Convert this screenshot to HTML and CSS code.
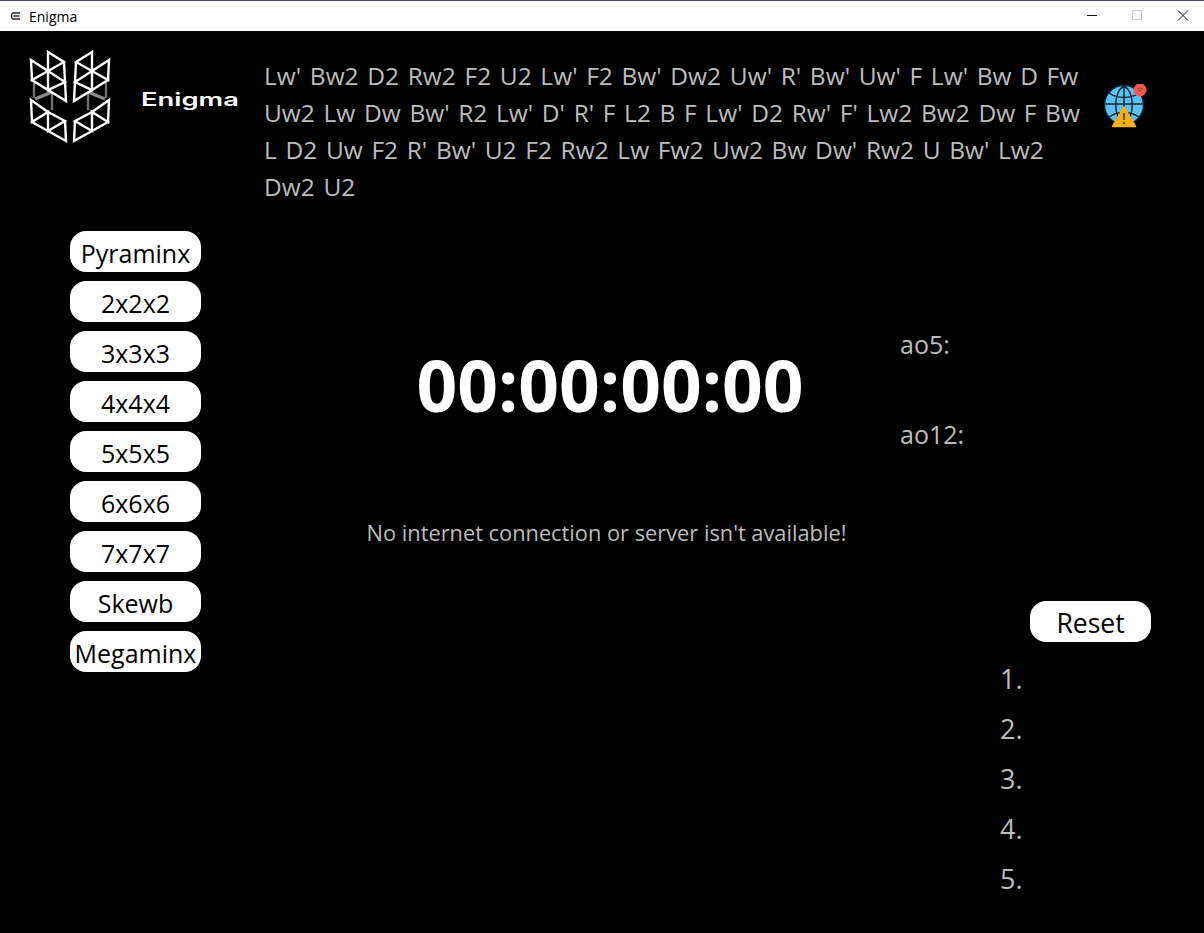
FILE: index.html
```html
<!DOCTYPE html>
<html lang="en">
<head>
<meta charset="utf-8">
<title>Enigma</title>
<link rel="stylesheet" href="styles.css">
</head>
<body>
<div class="titlebar">
  <div class="app-title"><svg class="app-icon" viewBox="0 0 10 8"><path d="M9.500 1H3Q1 1 1 4T3 7H9.500M3 4H9" fill="none" stroke="#222" stroke-width="1.300"/></svg><span>Enigma</span></div>
  <div class="win-controls">
    <svg viewBox="0 0 46 30"><path d="M21 14.500H31" stroke="#111"/></svg>
    <svg viewBox="0 0 46 30"><rect x="20.500" y="9.500" width="9" height="9" fill="none" stroke="#ccc"/></svg>
    <svg viewBox="0 0 46 30"><path d="M20 9.500L30 19.500M30 9.500L20 19.500" stroke="#111"/></svg>
  </div>
</div>
<header class="header">
  <svg class="logo" viewBox="0 0 100 100">
    <g id="half">
      <path class="logo-back" d="M14 37V53M32 47V65"/>
      <path class="logo-diag" d="M15 54L32 47"/>
      <path class="logo-line" d="M11 15L28 26L12 35ZM28 7L44 17L28 26ZM12 35L28 45V26ZM28 26L45 37L28 45ZM44 17L46 56L28 45"/>
      <path class="logo-line" d="M11 55L28 67L12 77ZM28 67L45 76L28 86ZM12 77L28 86V67ZM45 76L46 96L28 86"/>
    </g>
    <use href="#half" transform="translate(100 0) scale(-1 1)"/>
  </svg>
  <div class="brand">Enigma</div>
  <p class="scramble">Lw' Bw2 D2 Rw2 F2 U2 Lw' F2 Bw' Dw2 Uw' R' Bw' Uw' F Lw' Bw D Fw Uw2 Lw Dw Bw' R2 Lw' D' R' F L2 B F Lw' D2 Rw' F' Lw2 Bw2 Dw F Bw L D2 Uw F2 R' Bw' U2 F2 Rw2 Lw Fw2 Uw2 Bw Dw' Rw2 U Bw' Lw2 Dw2 U2</p>
  <svg class="status" viewBox="0 0 44 44">
    <circle cx="21" cy="21" r="19.500" fill="#5cc1ee" stroke="#17293a" stroke-width="1.500"/>
    <path d="M2 20H40M21 2V40M21 2C10 8 10 34 21 40M21 2C32 8 32 34 21 40M6 9C15 15 27 15 36 9M6 33C15 27 27 27 36 33" fill="none" stroke="#17293a" stroke-width="1.500"/>
    <circle cx="37" cy="6" r="6.500" fill="#ef5a4c"/>
    <path d="M34 5Q37 2.500 40 5M35.500 7Q37 5.500 38.500 7" fill="none" stroke="#b93c33"/>
    <path d="M21 23L32.500 42.500H9.500Z" fill="#fbb000" stroke="#fbb000" stroke-width="1.500" stroke-linejoin="round"/>
    <path d="M21 29V36M21 38V40" stroke="#5c5148" stroke-width="2"/>
  </svg>
</header>
<main class="main">
  <nav class="puzzles">
    <button class="btn">Pyraminx</button>
    <button class="btn">2x2x2</button>
    <button class="btn">3x3x3</button>
    <button class="btn">4x4x4</button>
    <button class="btn">5x5x5</button>
    <button class="btn">6x6x6</button>
    <button class="btn">7x7x7</button>
    <button class="btn">Skewb</button>
    <button class="btn">Megaminx</button>
  </nav>
  <section class="center">
    <div class="timer">00:00:00:00</div>
    <div class="message">No internet connection or server isn't available!</div>
  </section>
  <aside class="side">
    <div class="avg">ao5:</div>
    <div class="avg">ao12:</div>
    <button class="btn reset">Reset</button>
    <ol class="times">
      <li>1.</li><li>2.</li><li>3.</li><li>4.</li><li>5.</li>
    </ol>
  </aside>
</main>
</body>
</html>
```

FILE: styles.css
```css
* { box-sizing: border-box; }
html, body { margin: 0; height: 100%; }
body {
  background: #000;
  font-family: "Open Sans", "Noto Sans", "Liberation Sans", sans-serif;
  color: #bdbdbd;
  overflow: hidden;
}
.titlebar {
  height: 31px;
  background: #fff;
  border-top: 1px solid #4a5068;
  display: flex;
  justify-content: space-between;
  align-items: center;
}
.app-title {
  display: flex;
  align-items: center;
  gap: 8px;
  padding-left: 10px;
  font-size: 14px;
  color: #000;
}
.app-icon { width: 11px; height: 8px; }
.win-controls { display: flex; }
.win-controls svg { width: 46px; height: 30px; }
.header {
  height: 178px;
  display: flex;
  align-items: flex-start;
}
.logo { width: 100px; height: 100px; margin: 14px 0 0 20px; flex: none; }
.logo-line { fill: none; stroke: #fff; stroke-width: 2.400; stroke-linejoin: miter; }
.logo-back { fill: none; stroke: #6f6f6f; stroke-width: 2.400; }
.logo-diag { fill: none; stroke: #8a8a8a; stroke-width: 3.500; }
.brand {
  width: 97px;
  margin: 57px 0 0 21px;
  font-family: "Inter", sans-serif;
  font-weight: 600;
  font-size: 18px;
  line-height: 24px;
  color: #fff;
  flex: none;
  transform: scaleX(1.520);
  transform-origin: left center;
}
.scramble {
  margin: 26px 0 0 26px;
  width: 818px;
  font-size: 24.500px;
  word-spacing: 2.300px;
  line-height: 37px;
  flex: none;
}
.status { width: 44px; height: 44px; margin: 53px 0 0 21px; flex: none; }
.main {
  display: grid;
  grid-template-columns: 320px 580px 304px;
  height: 724px;
}
.puzzles {
  padding: 22px 0 0 70px;
  display: flex;
  flex-direction: column;
  gap: 9px;
  align-items: flex-start;
}
.btn {
  width: 131px;
  height: 41px;
  padding: 3px 0 0;
  border: 0;
  border-radius: 16px;
  background: #fff;
  color: #000;
  font: inherit;
  font-size: 25px;
  line-height: 38px;
  white-space: nowrap;
}
.center { display: flex; flex-direction: column; align-items: center; }
.timer {
  margin-top: 128px;
  font-size: 71.300px;
  line-height: 96px;
  font-weight: 700;
  color: #fff;
  white-space: nowrap;
}
.message {
  margin-top: 85px;
  padding-right: 7px;
  font-size: 21.800px;
  line-height: 30px;
  white-space: nowrap;
}
.side { display: flex; flex-direction: column; align-items: flex-start; }
.avg { font-size: 25px; line-height: 34px; height: 90px; }
.avg:first-child { margin-top: 118px; }
.reset { width: 121px; margin: 94px 0 0 130px; font-size: 26.500px; }
.times { list-style: none; margin: 12px 0 0 100px; padding: 0; font-size: 27px; }
.times li { height: 50px; line-height: 50px; }
```
